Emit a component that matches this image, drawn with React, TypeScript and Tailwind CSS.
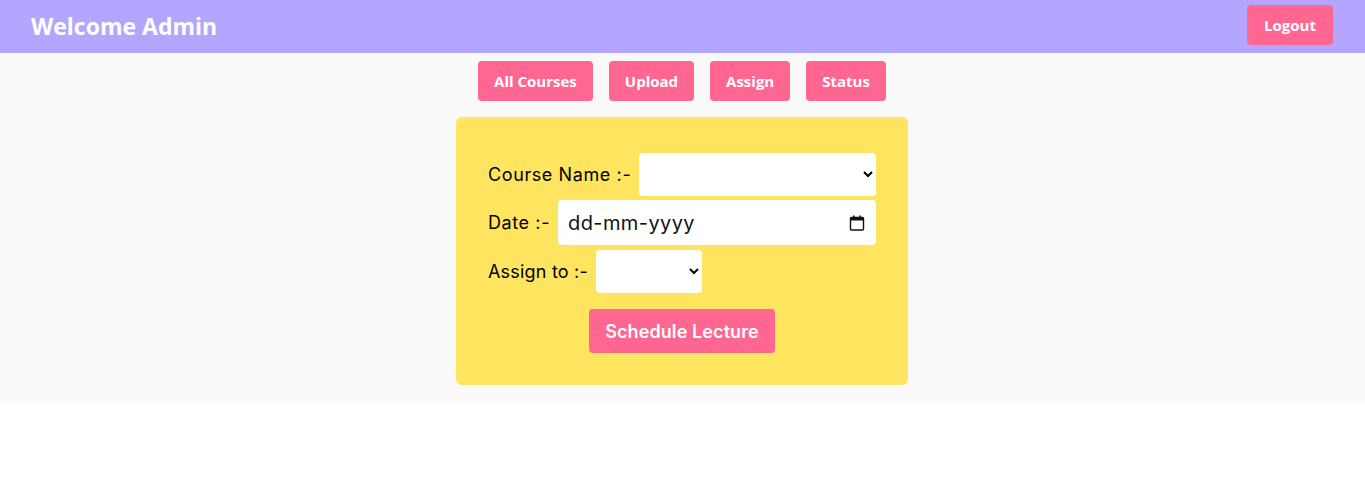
import { useState } from "react";

const tabs = ["All Courses", "Upload", "Assign", "Status"];

export default function App() {
  const [course, setCourse] = useState("");
  const [teacher, setTeacher] = useState("");

  return (
    <div className="min-h-screen bg-white font-['Open_Sans',sans-serif]">
      <header className="flex h-[53px] items-start justify-between bg-[#b4a5ff] pl-[31px] pr-[32px]">
        <h2 className="mt-[9px] text-[23px] font-bold text-white">Welcome Admin</h2>
        <button className="mt-[5px] h-10 rounded bg-[#ff6691] px-[17px] text-[15px] font-bold text-white">
          Logout
        </button>
      </header>

      <main className="flex flex-col items-center bg-[#f9f9f9] pb-4 pt-2">
        <nav className="mr-px flex gap-4">
          {tabs.map((t) => (
            <button
              key={t}
              className="h-10 rounded bg-[#ff6691] px-4 text-[15px] font-bold text-white"
            >
              {t}
            </button>
          ))}
        </nav>

        <form
          className="mr-px mt-4 flex w-[452px] flex-col gap-1 rounded-md bg-[#ffe55f] px-8 pb-8 pt-9 font-['Inter',sans-serif] text-[18px] tracking-[0.6px] text-black"
          onSubmit={(e) => e.preventDefault()}
        >
          <div className="flex items-center gap-2">
            <label className="whitespace-nowrap">Course Name :-</label>
            <select
              value={course}
              onChange={(e) => setCourse(e.target.value)}
              className="h-[43px] flex-1 rounded border-0 bg-white px-2 text-[17px]"
            >
              <option value=""></option>
            </select>
          </div>

          <div className="flex items-center gap-2">
            <label className="whitespace-nowrap">Date :-</label>
            <div className="flex h-[45px] flex-1 items-center rounded bg-white pl-[10px] pr-[11px]">
              <input
                readOnly
                value="dd-mm-yyyy"
                className="w-full min-w-0 bg-transparent text-[20px] tracking-[0.4px] text-[#111] outline-none"
              />
              <svg width="16" height="16" viewBox="0 0 16 16" className="shrink-0">
                <rect x="1.5" y="2.5" width="13" height="12.5" rx="1" fill="none" stroke="#111" strokeWidth="1.4" />
                <rect x="1.5" y="2.5" width="13" height="3" fill="#111" />
                <rect x="4" y="0.5" width="1.6" height="3" fill="#111" />
                <rect x="10.4" y="0.5" width="1.6" height="3" fill="#111" />
              </svg>
            </div>
          </div>

          <div className="mt-px flex items-center gap-2">
            <label className="whitespace-nowrap tracking-[0.2px]">Assign to :-</label>
            <select
              value={teacher}
              onChange={(e) => setTeacher(e.target.value)}
              className="h-[43px] w-[106px] rounded border-0 bg-white px-2 text-[17px]"
            >
              <option value=""></option>
            </select>
          </div>

          <button
            type="submit"
            className="mx-auto mt-3 h-11 rounded bg-[#ff6691] px-4 text-[18px] font-semibold tracking-[0.1px] text-white"
          >
            Schedule Lecture
          </button>
        </form>
      </main>
    </div>
  );
}
